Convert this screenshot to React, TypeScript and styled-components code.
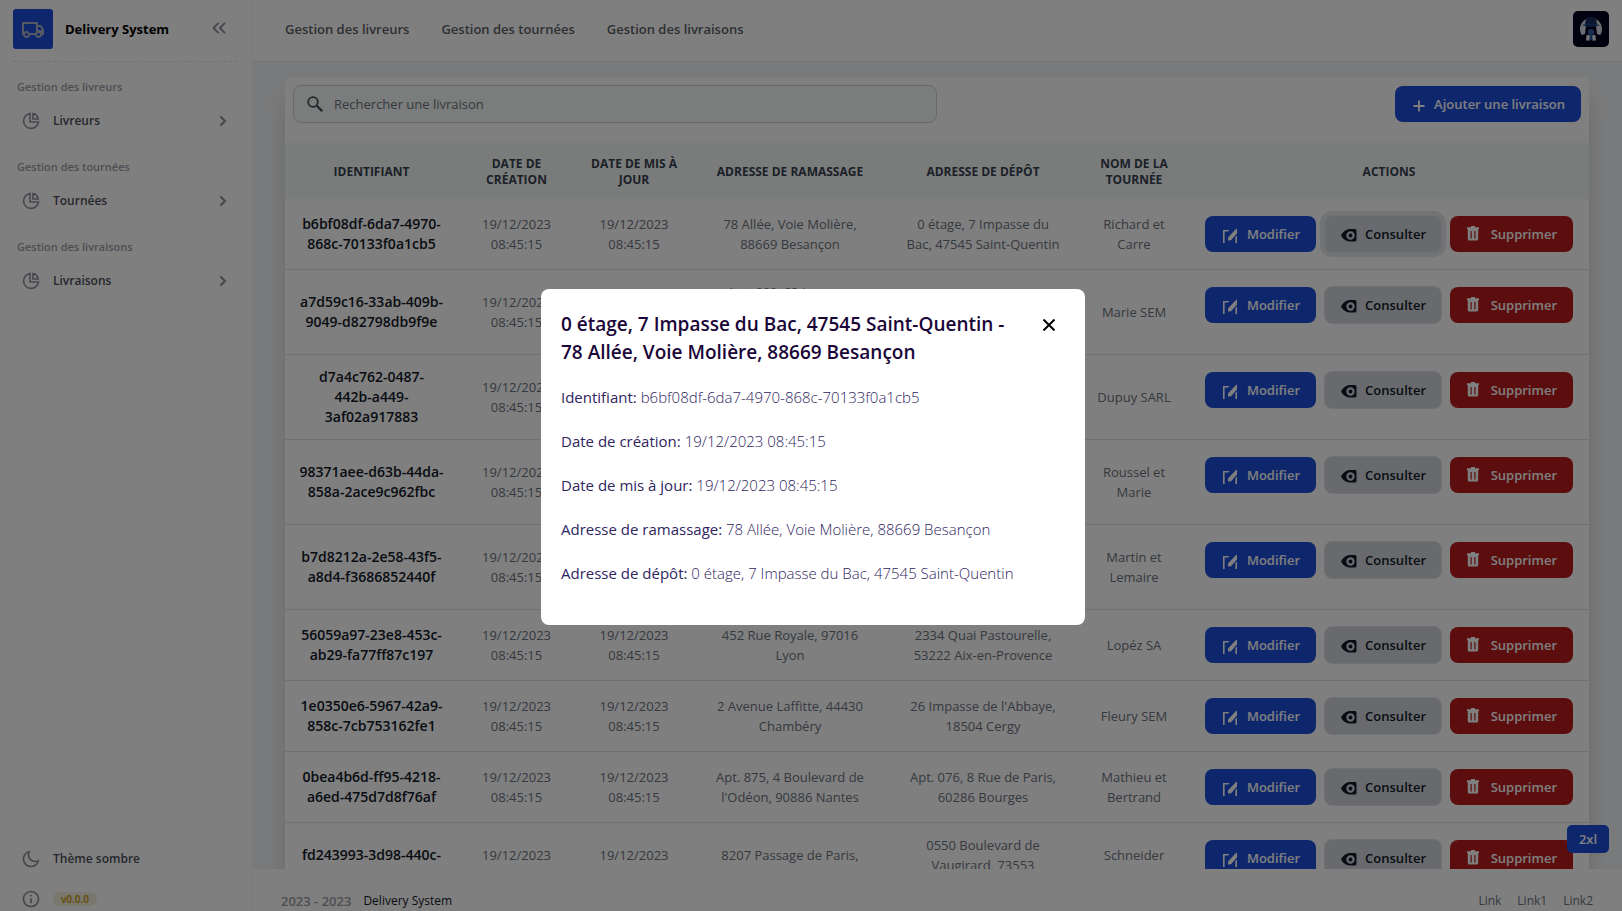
import React from "react";
import styled, { createGlobalStyle, css } from "styled-components";
import { RiTruckLine, RiMoonLine, RiInformationLine } from "react-icons/ri";
import { FiChevronRight, FiChevronsLeft } from "react-icons/fi";

const GlobalStyle = createGlobalStyle`
  *, *::before, *::after { box-sizing: border-box; }
  body {
    margin: 0;
    font-family: "Open Sans", "Noto Sans", sans-serif;
    font-size: 13px;
    line-height: 20px;
    color: #111827;
    background: #fff;
  }
  h1, h2, p { margin: 0; padding: 0; }
  a { color: inherit; text-decoration: none; }
  button { font: inherit; color: inherit; border: 0; background: none; padding: 0; cursor: pointer; }
`;

const Shell = styled.div`
  display: flex;
  height: 100vh;
  overflow: hidden;
`;

/* Sidebar */
const Sidebar = styled.aside`
  display: flex;
  flex-direction: column;
  flex: 0 0 253px;
  border-right: 1px solid #f3f4f6;
  background: #fff;
`;

const Brand = styled.div`
  display: flex;
  align-items: center;
  gap: 12px;
  height: 62px;
  margin: 0 15px 0 13px;
  padding: 0 12px 4px 0;
  border-bottom: 1px dashed #e1e3ea;
`;

const Logo = styled.span`
  display: grid;
  place-items: center;
  width: 40px;
  height: 40px;
  border-radius: 3px;
  background: #1d4ed8;
  color: #a9b0c4;
  font-size: 24px;
`;

const BrandName = styled.strong`
  flex: 1;
  font-weight: 700;
  color: #000;
`;

const CollapseButton = styled.button`
  display: grid;
  place-items: center;
  height: 20px;
  margin: 0 -5px 4px 0;
  font-size: 22px;
  color: #8b8f98;
`;

const Menu = styled.nav`
  display: flex;
  flex-direction: column;
  gap: 16px;
  padding: 15px 21px 0 17px;
  flex: 1;
`;

const MenuHeading = styled.h2`
  margin-bottom: 4px;
  font-size: 11px;
  font-weight: 600;
  line-height: 20px;
  color: #9a9da6;
`;

const MenuLink = styled.a`
  display: flex;
  align-items: center;
  gap: 12px;
  height: 40px;
  padding-left: 4px;
  font-size: 12px;
  font-weight: 600;
  color: #4b4f5a;

  svg { color: #8b8f98; }
  svg:last-child { font-size: 16px; stroke-width: 3; }
  span { flex: 1; }
`;

const SidebarFoot = styled.div`
  display: flex;
  flex-direction: column;
  gap: 20px;
  padding: 0 21px 2px;
`;

const FootRow = styled.div`
  display: flex;
  align-items: center;
  gap: 12px;
  height: 20px;
  font-size: 12px;
  font-weight: 600;
  color: #4b4f5a;

  > svg, button > svg { color: #8b8f98; font-size: 20px; }
`;

const ThemeButton = styled.button`
  display: flex;
  align-items: center;
  gap: 12px;
`;

const Version = styled.span`
  padding: 0 8px;
  border-radius: 7px;
  background: #f4eedb;
  color: #c99400;
  font-size: 10px;
  line-height: 14px;
`;

/* Main column */
const Column = styled.div`
  display: flex;
  flex-direction: column;
  flex: 1;
  min-width: 0;
`;

const Header = styled.header`
  display: flex;
  align-items: center;
  justify-content: space-between;
  flex: 0 0 62px;
  padding: 0 13px 4px 32px;
  border-bottom: 1px solid #ecedf0;
`;

const HeaderNav = styled.nav`
  display: flex;
  gap: 32px;
  font-weight: 600;
  color: #5b5f68;
`;

const AvatarButton = styled.button`
  width: 36px;
  height: 36px;
  border-radius: 5px;
  overflow: hidden;
  background: #00001f;
`;

const Content = styled.main`
  flex: 1;
  min-height: 0;
  overflow: hidden;
  padding: 15px 33px 0 32px;
  background: #f3f4f6;
`;

const Card = styled.section`
  border-radius: 6px;
  background: #fff;
  box-shadow: 0 20px 25px -5px rgba(0, 0, 0, 0.12), 0 16px 24px rgba(0, 0, 0, 0.05);
`;

const Toolbar = styled.div`
  display: flex;
  align-items: center;
  justify-content: space-between;
  padding: 8px 8px 20px;
`;

const SearchField = styled.label`
  display: flex;
  align-items: center;
  gap: 11px;
  width: 50%;
  height: 38px;
  padding: 0 12px 0 13px;
  border: 1px solid #cdd5d2;
  border-radius: 8px;
  background: #f7faf9;
`;

const SearchInput = styled.input`
  flex: 1;
  min-width: 0;
  border: 0;
  outline: 0;
  padding: 0;
  background: transparent;
  font: inherit;
  &::placeholder { color: #6b7280; opacity: 1; }
`;

type Tone = "primary" | "neutral" | "danger";

const tones = {
  primary: css`background: #1d4ed8; color: #fff; padding: 0 16px 0 18px;`,
  neutral: css`background: #d1d5db; color: #111827; border: 1px solid #e0e3e8; padding: 0 15px 0 16px;`,
  danger: css`background: #b91c1c; color: #fff; padding: 0 16px 0 17px;`,
};

const Button = styled.button<{ $tone: Tone; $width: number; $active?: boolean }>`
  display: inline-flex;
  align-items: center;
  justify-content: space-between;
  min-width: ${(p) => p.$width}px;
  height: ${(p) => (p.$tone === "neutral" ? 38 : 36)}px;
  border-radius: 8px;
  font-weight: 600;
  white-space: nowrap;
  ${(p) => tones[p.$tone]}
  ${(p) => p.$active && css`box-shadow: 0 0 0 4px #e5e7eb;`}
`;

const Table = styled.table`
  width: 100%;
  table-layout: fixed;
  border-collapse: collapse;
  text-align: center;
`;

const Col = styled.col<{ $width: number }>`
  width: ${(p) => p.$width}px;
`;

const HeadCell = styled.th`
  padding: 13px 16px 11px;
  background: #f5f9f8;
  color: #374151;
  font-size: 12px;
  font-weight: 700;
  line-height: 16px;
  text-transform: uppercase;
`;

const Row = styled.tr`
  border-bottom: 1px solid #e1e3e6;
`;

const cell = css`
  padding: 12px 8px;
  white-space: pre-line;
`;

const Cell = styled.td`
  ${cell}
  color: #6b7280;
`;

const IdCell = styled.th`
  ${cell}
  font-size: 14px;
  font-weight: 600;
  color: #111827;
`;

const ActionCell = styled.td`
  padding: 16px;
  vertical-align: top;
`;

const Actions = styled.div`
  display: flex;
  align-items: center;
  gap: 8px;
`;

const Footer = styled.footer`
  display: flex;
  justify-content: space-between;
  flex: 0 0 42px;
  padding: 22px 29px 0 28px;
  background: #fff;
`;

const FooterGroup = styled.div<{ $gap: number }>`
  display: flex;
  gap: ${(p) => p.$gap}px;
  font-size: 12px;
  color: #6b7280;
`;

const Years = styled.span`
  font-size: 13px;
  font-weight: 600;
  color: #9a9da6;
`;

const FooterBrand = styled.a`
  color: #111827;
`;

const Breakpoint = styled.span`
  position: fixed;
  right: 13px;
  bottom: 58px;
  width: 42px;
  border-radius: 5px;
  background: #1d4ed8;
  color: #fff;
  font-weight: 600;
  line-height: 28px;
  text-align: center;
`;

/* Dialog */
const Backdrop = styled.div`
  position: fixed;
  inset: 0;
  display: grid;
  place-items: center;
  padding: 19px 16px 16px 20px;
  background: rgba(0, 0, 0, 0.5);
`;

const Dialog = styled.section`
  width: 100%;
  max-width: 544px;
  padding: 21px 20px 40px;
  border-radius: 8px;
  background: #fff;
`;

const DialogHead = styled.div`
  display: flex;
  align-items: flex-start;
  justify-content: space-between;
  margin-bottom: -1px;
`;

const DialogTitle = styled.h1`
  font-size: 19px;
  font-weight: 600;
  line-height: 28px;
  color: #1a0638;
  white-space: pre-line;
`;

const CloseButton = styled.button`
  display: grid;
  place-items: center;
  width: 32px;
  height: 30px;
  color: #000;
`;

const Detail = styled.p`
  margin-top: 20px;
  font-size: 15px;
  font-weight: 400;
  line-height: 24px;
  color: #2f2560;
`;

const DetailValue = styled.span`
  font-weight: 300;
`;

const PieIcon = () => (
  <svg width="20" height="20" viewBox="0 0 20 20" fill="none" stroke="currentColor" strokeWidth="1.6" aria-hidden="true">
    <path d="M9 2.500V11h8.500A7.500 7.500 0 1 1 9 2.500z" />
    <path d="M12 2.600A6.500 6.500 0 0 1 17.200 8H12z" />
  </svg>
);

const SearchIcon = () => (
  <svg width="16" height="16" viewBox="0 0 16 16" fill="none" stroke="#4b4f5a" strokeWidth="1.8" aria-hidden="true">
    <circle cx="6" cy="6" r="4.800" />
    <path d="M9.500 9.500 15.200 15.200" strokeWidth="2.300" />
  </svg>
);

const PlusIcon = () => (
  <svg width="12" height="16" viewBox="0 0 12 16" stroke="currentColor" strokeWidth="1.800" aria-hidden="true">
    <path d="M6 4.500v11M.5 10h11" />
  </svg>
);

const EditIcon = () => (
  <svg width="14" height="18" viewBox="0 0 14 18" fill="currentColor" aria-hidden="true">
    <path d="M0 5h6.500L5 6.600H1.600V18H0zM5 15.500V12.500L12.500 4.500 14 3.500v5L8 15.300zM12.400 12 14 10.500V18h-1.600z" />
  </svg>
);

const EyeIcon = () => (
  <svg width="16" height="18" viewBox="0 0 16 18" fill="currentColor" aria-hidden="true">
    <path
      fillRule="evenodd"
      d="M0 10.500C2 6.500 5.500 4 9.500 4h4.500c1 0 1.500 1 1.500 2v8.500c0 1-.5 2-1.500 2H9.500C5.500 16.500 2 14.500 0 10.500zm9.500-4.200a4.200 4.200 0 1 0 0 8.400 4.200 4.200 0 0 0 0-8.400zm0 2.200a2 2 0 1 1 0 4 2 2 0 0 1 0-4z"
    />
  </svg>
);

const TrashIcon = () => (
  <svg width="12" height="18" viewBox="0 0 12 18" fill="currentColor" aria-hidden="true">
    <path
      fillRule="evenodd"
      d="M4 1h4v1.200h4v2H0v-2h4zM.8 4.200h10.400V14a1.500 1.500 0 0 1-1.500 1.500H2.300A1.500 1.500 0 0 1 .8 14zM3.500 6v7.500h1.200V6zM7.300 6v7.500h1.200V6z"
    />
  </svg>
);

const CloseIcon = () => (
  <svg width="12" height="12" viewBox="0 0 12 12" stroke="currentColor" strokeWidth="2" aria-hidden="true">
    <path d="M.5.5l11 11M11.500.5l-11 11" />
  </svg>
);

const AvatarArt = () => (
  <svg width="36" height="36" viewBox="0 0 36 36" aria-hidden="true">
    <circle cx="18" cy="18" r="11" fill="#d5d9e2" />
    <path d="M6 25l6-2 1-8h10l1 8 6 2v8H6z" fill="#00001f" />
    <path d="M13.500 24.500l2.500-1 1 2v4h-4zM22.500 24.500l-2.500-1-1 2v4h4z" fill="#e4e7ee" />
    <path d="M17.200 24h1.600l1 5h-3.600z" fill="#2a5298" />
    <path d="M13 7q5-2 10 0l1 6q-6 2-12 0z" fill="#16305f" />
    <path d="M9 14q9-2.500 18 0-9 4-18 0z" fill="#1b3a78" />
    <circle cx="18" cy="21" r="3" fill="#2f5cae" />
  </svg>
);

const sections = [
  { heading: "Gestion des livreurs", item: "Livreurs" },
  { heading: "Gestion des tournées", item: "Tournées" },
  { heading: "Gestion des livraisons", item: "Livraisons" },
];

const columns = [
  { label: "Identifiant", width: 173 },
  { label: "Date de création", width: 117 },
  { label: "Date de mis à jour", width: 118 },
  { label: "Adresse de ramassage", width: 194 },
  { label: "Adresse de dépôt", width: 192 },
  { label: "Nom de la tournée", width: 110 },
  { label: "Actions", width: 400 },
];

const date = "19/12/2023\n08:45:15";

const deliveries = [
  ["b6bf08df-6da7-4970-\n868c-70133f0a1cb5", "78 Allée, Voie Molière,\n88669 Besançon", "0 étage, 7 Impasse du\nBac, 47545 Saint-Quentin", "Richard et\nCarre"],
  ["a7d59c16-33ab-409b-\n9049-d82798db9f9e", "Apt. 669, 83 Impasse\nde Provence, 54120\nNancy", "12 Rue du Bac,\n31200 Toulouse", "Marie SEM"],
  ["d7a4c762-0487-\n442b-a449-\n3af02a917883", "5 Rue de la Paix,\n69002 Lyon", "31 Avenue Foch,\n59000 Lille", "Dupuy SARL"],
  ["98371aee-d63b-44da-\n858a-2ace9c962fbc", "Apt. 112, 9 Rue\nSaint-Denis, 21000\nDijon", "4 Quai de Seine,\n76000 Rouen", "Roussel et\nMarie"],
  ["b7d8212a-2e58-43f5-\na8d4-f3686852440f", "3 étage, 15 Place\nde la Bourse, 33000\nBordeaux", "8 Rue Lepic,\n44000 Nantes", "Martin et\nLemaire"],
  ["56059a97-23e8-453c-\nab29-fa77ff87c197", "452 Rue Royale, 97016\nLyon", "2334 Quai Pastourelle,\n53222 Aix-en-Provence", "Lopéz SA"],
  ["1e0350e6-5967-42a9-\n858c-7cb753162fe1", "2 Avenue Laffitte, 44430\nChambéry", "26 Impasse de l'Abbaye,\n18504 Cergy", "Fleury SEM"],
  ["0bea4b6d-ff95-4218-\na6ed-475d7d8f76af", "Apt. 875, 4 Boulevard de\nl'Odéon, 90886 Nantes", "Apt. 076, 8 Rue de Paris,\n60286 Bourges", "Mathieu et\nBertrand"],
  ["fd243993-3d98-440c-\n9b1e-5c0a7e21d4b8", "8207 Passage de Paris,\n75011 Paris", "0550 Boulevard de\nVaugirard, 73553\nMetz", "Schneider\nSARL"],
];

const details = [
  ["Identifiant:", "b6bf08df-6da7-4970-868c-70133f0a1cb5"],
  ["Date de création:", "19/12/2023 08:45:15"],
  ["Date de mis à jour:", "19/12/2023 08:45:15"],
  ["Adresse de ramassage:", "78 Allée, Voie Molière, 88669 Besançon"],
  ["Adresse de dépôt:", "0 étage, 7 Impasse du Bac, 47545 Saint-Quentin"],
];

export default function App() {
  return (
    <>
      <GlobalStyle />
      <Shell>
        <Sidebar>
          <Brand>
            <Logo><RiTruckLine /></Logo>
            <BrandName>Delivery System</BrandName>
            <CollapseButton aria-label="Réduire le menu"><FiChevronsLeft /></CollapseButton>
          </Brand>
          <Menu>
            {sections.map((s) => (
              <div key={s.item}>
                <MenuHeading>{s.heading}</MenuHeading>
                <MenuLink href="#">
                  <PieIcon />
                  <span>{s.item}</span>
                  <FiChevronRight />
                </MenuLink>
              </div>
            ))}
          </Menu>
          <SidebarFoot>
            <FootRow>
              <ThemeButton><RiMoonLine />Thème sombre</ThemeButton>
            </FootRow>
            <FootRow>
              <RiInformationLine />
              <Version>v0.0.0</Version>
            </FootRow>
          </SidebarFoot>
        </Sidebar>

        <Column>
          <Header>
            <HeaderNav>
              {sections.map((s) => <a key={s.item} href="#">{s.heading}</a>)}
            </HeaderNav>
            <AvatarButton aria-label="Compte"><AvatarArt /></AvatarButton>
          </Header>
          <Content>
            <Card>
              <Toolbar>
                <SearchField>
                  <SearchIcon />
                  <SearchInput type="text" aria-label="Rechercher une livraison" placeholder="Rechercher une livraison" />
                </SearchField>
                <Button $tone="primary" $width={186}><PlusIcon />Ajouter une livraison</Button>
              </Toolbar>
              <Table>
                <colgroup>
                  {columns.map((c) => <Col key={c.label} $width={c.width} />)}
                </colgroup>
                <thead>
                  <tr>{columns.map((c) => <HeadCell key={c.label} scope="col">{c.label}</HeadCell>)}</tr>
                </thead>
                <tbody>
                  {deliveries.map(([id, pickup, dropoff, round], i) => (
                    <Row key={id}>
                      <IdCell scope="row">{id}</IdCell>
                      <Cell>{date}</Cell>
                      <Cell>{date}</Cell>
                      <Cell>{pickup}</Cell>
                      <Cell>{dropoff}</Cell>
                      <Cell>{round}</Cell>
                      <ActionCell>
                        <Actions>
                          <Button $tone="primary" $width={111}><EditIcon />Modifier</Button>
                          <Button $tone="neutral" $width={118} $active={i === 0}><EyeIcon />Consulter</Button>
                          <Button $tone="danger" $width={123}><TrashIcon />Supprimer</Button>
                        </Actions>
                      </ActionCell>
                    </Row>
                  ))}
                </tbody>
              </Table>
            </Card>
          </Content>
          <Footer>
            <FooterGroup $gap={12}>
              <Years>2023 - 2023</Years>
              <FooterBrand href="#">Delivery System</FooterBrand>
            </FooterGroup>
            <FooterGroup $gap={16}>
              <a href="#">Link</a>
              <a href="#">Link1</a>
              <a href="#">Link2</a>
            </FooterGroup>
          </Footer>
        </Column>
      </Shell>
      <Breakpoint>2xl</Breakpoint>
      <Backdrop>
        <Dialog role="dialog" aria-modal="true" aria-labelledby="dialog-title">
          <DialogHead>
            <DialogTitle id="dialog-title">{"0 étage, 7 Impasse du Bac, 47545 Saint-Quentin -\n78 Allée, Voie Molière, 88669 Besançon"}</DialogTitle>
            <CloseButton aria-label="Fermer"><CloseIcon /></CloseButton>
          </DialogHead>
          {details.map(([label, value]) => (
            <Detail key={label}>{label} <DetailValue>{value}</DetailValue></Detail>
          ))}
        </Dialog>
      </Backdrop>
    </>
  );
}
